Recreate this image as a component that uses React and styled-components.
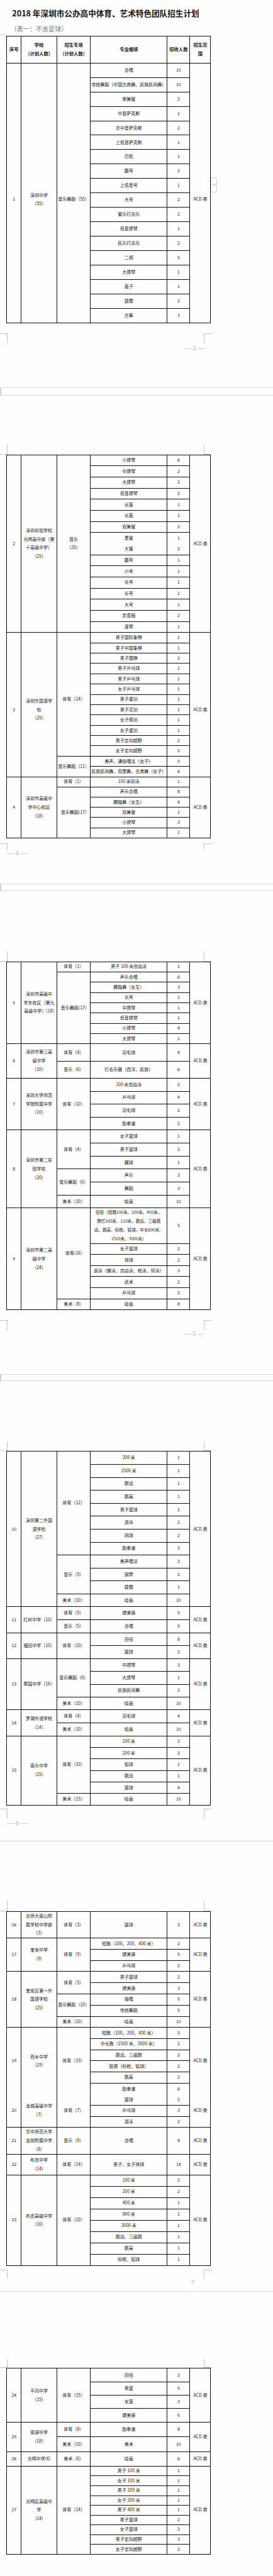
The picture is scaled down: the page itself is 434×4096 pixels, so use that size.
import React from 'react';
import styled, { createGlobalStyle } from 'styled-components';

// reference was 653px wide, the window is 434px
const K = 0.664;
const u = (v) => `${(v * K).toFixed(2)}px`;

const ACD = 'ACD 类';

const GlobalStyle = createGlobalStyle`
  html, body {
    margin: 0;
    padding: 0;
    background: #fefefe;
  }
  body {
    font-family: "Noto Sans CJK SC", "Noto Sans", sans-serif;
    color: #111;
  }
`;

const Page = styled.div`
  position: relative;
  width: 434px;
  height: 4096px;
  overflow: hidden;
`;

const Title = styled.h1`
  margin: 0;
  padding: ${u(19)} 0 0 ${u(29)};
  font-size: ${u(19)};
  line-height: ${u(24)};
  font-weight: 700;
  color: #141414;
  white-space: nowrap;
`;

const Subtitle = styled.div`
  margin-top: ${u(16.5)};
  padding-left: ${u(25)};
  font-size: ${u(15.2)};
  line-height: ${u(18)};
  color: #7a7a7a;
  white-space: nowrap;
`;

const EdgeMark = styled.div`
  width: ${u(15)};
  height: ${u(5)};
  border-bottom: 1px solid #d2d2d2;
`;

const Sheet = styled.table`
  margin-left: ${u(15.7)};
  margin-top: ${(p) => u(p.$top || 0)};
  width: ${u(488)};
  table-layout: fixed;
  border-collapse: separate;
  border-spacing: 0;
  border-top: 1px solid #111;
  border-left: 1px solid #111;
`;

const Col = styled.col`
  width: ${(p) => u(p.$w)};
`;

const Row = styled.tr`
  height: ${(p) => u(p.$h)};
`;

const Cell = styled.td`
  box-sizing: border-box;
  border-right: 1px solid #111;
  border-bottom: ${(p) =>
    p.$open ? 'none' : p.$thick ? '1.6px solid #111' : '1px solid #111'};
  padding: ${(p) => (p.$shift ? `${u(p.$shift)} 1px 0` : '0 1px')};
  text-align: center;
  vertical-align: middle;
  white-space: pre;
  font-size: ${(p) => (p.$small ? '6.6px' : '7px')};
  line-height: ${u(20.8)};
  color: #161616;
`;

const HeadCell = styled(Cell).attrs({ as: 'th' })`
  font-size: 7.3px;
  font-weight: 700;
  color: #111;
`;

const Marks = styled.div`
  display: flex;
  justify-content: space-between;
  width: ${u(508)};
  height: ${(p) => u(p.$h)};
  margin-top: ${(p) => u(p.$gap || 0)};
`;

const Mark = styled.div`
  width: ${(p) => u(p.$w)};
  border: 0 solid #c4c4c4;
  ${(p) => (p.$right ? 'border-left-width: 1px;' : 'border-right-width: 1px;')}
  ${(p) => (p.$foot ? 'border-top-width: 1px;' : 'border-bottom-width: 1px;')}
`;

const PageNum = styled.div`
  display: flex;
  justify-content: ${(p) => (p.$left ? 'flex-start' : 'flex-end')};
  height: ${(p) => u(p.$h)};
  margin-top: ${(p) => u(p.$gap)};
  padding: 0 ${(p) => u(p.$pr || 165)} 0 ${u(17)};
  ${(p) => (p.$left ? `padding-right: 0;` : `padding-left: 0;`)}
  font-family: "Liberation Serif", serif;
  font-size: ${u(16)};
  line-height: ${u(15)};
  color: #a8a8a8;
  white-space: pre;
`;

const Separator = styled.div`
  box-sizing: border-box;
  margin-top: ${(p) => u(p.$gap)};
  height: ${(p) => (p.$double ? u(p.$h) : '1px')};
  border-top: 1px solid #d8d8d8;
  border-bottom: ${(p) => (p.$double ? '1px solid #d8d8d8' : 'none')};
  border-left: ${(p) => (p.$double ? '2px solid #d0d0d0' : 'none')};
`;

const ZoomButton = styled.div`
  position: absolute;
  left: ${u(505)};
  top: ${u(425)};
  width: ${u(15)};
  height: ${u(36)};
  box-sizing: border-box;
  border: 1px solid #cfcfcf;
  border-radius: 3px;
  background: #fff;
  display: flex;
  align-items: center;
  justify-content: center;
  font-family: "Liberation Sans", sans-serif;
  font-size: 9px;
  color: #9a9a9a;
`;

const COLS = [34.3, 85.7, 80, 184, 54.3, 49.7];

const pages = [
  {
    header: true,
    schools: [
      {
        seq: '1', name: '深圳中学\n（55）', h: 34.56, shift: 32,
        groups: [
          {
            cat: '音乐舞蹈（55）',
            items: [
              ['合唱', '15'], ['传统舞蹈（中国古典舞、民族民间舞）', '10'], ['单簧管', '2'],
              ['中音萨克斯', '1'], ['次中音萨克斯', '2'], ['上低音萨克斯', '1'], ['巴松', '1'],
              ['圆号', '2'], ['上低音号', '1'], ['大号', '2'], ['管乐打击乐', '2'],
              ['低音提琴', '1'], ['民乐打击乐', '2'], ['二胡', '5'], ['大提琴', '1'],
              ['笛子', '1'], ['琵琶', '2'], ['古筝', '3'],
            ],
          },
        ],
      },
    ],
  },
  {
    schools: [
      {
        seq: '2', name: '深圳实验学校\n光明高中部（第\n十高级中学）\n（25）', h: 26.625,
        groups: [
          {
            cat: '音乐\n（25）',
            items: [
              ['小提琴', '6'], ['中提琴', '2'], ['大提琴', '2'], ['低音提琴', '2'], ['长笛', '1'],
              ['长笛', '1'], ['双簧管', '2'], ['黑管', '1', 0, 'open'], ['大管', '2'], ['圆号', '1'],
              ['小号', '1'], ['长号', '1'], ['长号', '1'], ['大号', '1'], ['定音鼓', '2'], ['竖琴', '1'],
            ],
          },
        ],
      },
      {
        seq: '3', name: '深圳外国语学\n校\n（25）', h: 24.69, shift: 24,
        groups: [
          {
            cat: '体育（14）',
            items: [
              ['男子国际象棋', '1'], ['男子中国象棋', '1'], ['男子围棋', '2'], ['男子乒乓球', '1'],
              ['男子乒乓球', '1'], ['女子乒乓球', '1'], ['男子重剑', '1'], ['男子花剑', '1'],
              ['女子佩剑', '1'], ['女子重剑', '1'], ['男子定向越野', '2'], ['女子定向越野', '2'],
            ],
          },
          {
            cat: '音乐舞蹈（11）',
            items: [['美声、通俗唱法（女子）', '5'], ['民族民间舞、芭蕾舞、古典舞（女子）', '6']],
          },
        ],
      },
      {
        seq: '4', name: '深圳市高级中\n学中心校区\n（18）', h: 24.39,
        groups: [
          { cat: '体育（1）', items: [['100 米仰泳', '1']] },
          {
            cat: '音乐舞蹈(17)',
            items: [['声乐合唱', '8'], ['踢踏舞（女生）', '4'], ['双簧管', '1'], ['小提琴', '3'], ['大提琴', '1']],
          },
        ],
      },
    ],
  },
  {
    schools: [
      {
        seq: '5', name: '深圳市高级中\n学东校区（第九\n高级中学）(18)', h: 24.625,
        groups: [
          { cat: '体育（1）', items: [['男子 100 米自由泳', '1']] },
          {
            cat: '音乐舞蹈(17)',
            items: [
              ['声乐合唱', '6'], ['踢踏舞（女生）', '3'], ['长号', '1'], ['中提琴', '1'],
              ['低音提琴', '1'], ['小提琴', '4'], ['大提琴', '1'],
            ],
          },
        ],
      },
      {
        seq: '6', name: '深圳市第三高\n级中学\n（10）', h: 41.15,
        groups: [
          { cat: '体育（4）', items: [['羽毛球', '4']] },
          { cat: '音乐（6）', items: [['打击乐器（西洋、民族）', '6']] },
        ],
      },
      {
        seq: '7', name: '深圳大学师范\n学院附属中学\n（10）', h: 31,
        groups: [
          { cat: '体育（10）', items: [['100 米自由泳', '2'], ['乒乓球', '4'], ['羽毛球', '2'], ['跆拳道', '2']] },
        ],
      },
      {
        seq: '8', name: '深圳市第二实\n验学校\n(20)', h: 31.17,
        groups: [
          { cat: '体育（4）', items: [['女子篮球', '1'], ['男子篮球', '2'], ['毽球', '1']] },
          { cat: '音乐舞蹈（6）', items: [['声乐', '3'], ['舞蹈', '3']] },
          { cat: '美术（10）', items: [['绘画', '10']] },
        ],
      },
      {
        seq: '9', name: '深圳市第二高\n级中学\n(24)', h: 26.5,
        groups: [
          {
            cat: '体育(16)',
            items: [
              ['田径（短跑100米、200米、400米，\n跨栏100米、110米，跳远、三级跳\n远、跳高、标枪、铅球、中长800米、\n1500米、3000米）', '5', 84, 'small'],
              ['女子篮球', '2'], ['排球', '2'], ['游泳（蝶泳、自由泳、蛙泳、仰泳）', '3'],
              ['武术', '2'], ['乒乓球', '2'],
            ],
          },
          { cat: '美术（8）', items: [['绘画', '8']] },
        ],
      },
    ],
  },
  {
    schools: [
      {
        seq: '10', name: '深圳第二外国\n语学校\n(27)', h: 31.02,
        groups: [
          {
            cat: '体育（12）',
            items: [
              ['200 米', '1'], ['1500 米', '1'], ['跳远', '1'], ['跳高', '1'], ['男子篮球', '2'],
              ['游泳', '2'], ['网球', '2'], ['跆拳道', '2'],
            ],
          },
          { cat: '音乐（5）', items: [['美声唱法', '2'], ['钢琴', '2'], ['琵琶', '1']] },
          { cat: '美术（10）', items: [['绘画', '10']] },
        ],
      },
      {
        seq: '11', name: '红岭中学（10）', h: 31,
        groups: [
          { cat: '体育（5）', items: [['健美操', '5']] },
          { cat: '音乐（5）', items: [['合唱', '5']] },
        ],
      },
      {
        seq: '12', name: '福田中学（10）', h: 31,
        groups: [{ cat: '体育（10）', items: [['田径', '8'], ['篮球', '2']] }],
      },
      {
        seq: '13', name: '翠园中学（16）', h: 30.75,
        groups: [
          { cat: '音乐舞蹈（6）', items: [['中提琴', '3'], ['大提琴', '1'], ['民族民间舞', '2']] },
          { cat: '美术（10）', items: [['绘画', '10']] },
        ],
      },
      {
        seq: '14', name: '罗湖外语学校\n（14）', h: 31,
        groups: [
          { cat: '体育（4）', items: [['羽毛球', '4']] },
          { cat: '美术（10）', items: [['绘画', '10']] },
        ],
      },
      {
        seq: '15', name: '南头中学\n(25)', h: 27.67,
        groups: [
          {
            cat: '体育（10）',
            items: [['100 米', '2'], ['200 米', '2'], ['铅球', '1'], ['跳远', '1', 0, 'thick'], ['篮球', '4']],
          },
          { cat: '美术（15）', items: [['绘画', '15']] },
        ],
      },
    ],
  },
  {
    schools: [
      {
        seq: '16', name: '北师大南山附\n属学校中学部\n（3）', h: 63.3,
        groups: [{ cat: '体育（3）', items: [['篮球', '3']] }],
      },
      {
        seq: '17', name: '宝安中学\n(9)', h: 26.67,
        groups: [
          { cat: '体育（9）', items: [['短跑（100、200、400 米）', '2'], ['健美操', '5'], ['乒乓球', '2']] },
        ],
      },
      {
        seq: '18', name: '宝安区第一外\n国语学校\n(25)', h: 26.8,
        groups: [
          { cat: '体育（5）', items: [['男子篮球', '2'], ['健美操', '3']] },
          { cat: '音乐舞蹈（10）', items: [['独唱', '5'], ['传统舞蹈', '5']] },
          { cat: '美术（10）', items: [['绘画', '10']] },
        ],
      },
      {
        seq: '19', name: '西乡中学\n(19)', h: 26.6, open: true,
        groups: [
          {
            cat: '体育（19）',
            items: [
              ['短跑（100、200、400 米）', '5'], ['中长跑（1500 米、3000 米）', '2'],
              ['跳远、三级跳', '2'], ['投掷（标枪、铅球）', '2'], ['跳高', '2'], ['跆拳道', '6', 0, 'open'],
            ],
          },
        ],
      },
      {
        seq: '20', name: '龙城高级中学\n(7)', h: 26.6,
        groups: [{ cat: '体育（7）', items: [['篮球', '2'], ['乒乓球', '3'], ['游泳', '2']] }],
      },
      {
        seq: '21', name: '华中师范大学\n龙岗附属中学\n（8）', h: 62.6,
        groups: [{ cat: '音乐（8）', items: [['合唱', '8']] }],
      },
      {
        seq: '22', name: '布吉中学\n(14)', h: 50,
        groups: [{ cat: '体育（14）', items: [['男子、女子排球', '14']] }],
      },
      {
        seq: '23', name: '布吉高级中学\n(10)', h: 27.09,
        groups: [
          {
            cat: '体育（10）',
            items: [
              ['100 米', '2'], ['200 米', '2'], ['400 米', '1'], ['800 米', '1'], ['3000 米', '1'],
              ['跳远、三级跳', '1'], ['跳高', '1'], ['标枪、铅球', '1'],
            ],
          },
        ],
      },
    ],
  },
  {
    schools: [
      {
        seq: '24', name: '平冈中学\n(15)', h: 32.17,
        groups: [{ cat: '体育（15）', items: [['田径', '2'], ['男篮', '5'], ['女篮', '3'], ['健美操', '5']] }],
      },
      {
        seq: '25', name: '观澜中学\n（18）', h: 35.35,
        groups: [
          { cat: '体育（8）', items: [['跆拳道', '8']] },
          { cat: '美术（10）', items: [['美术', '10']] },
        ],
      },
      {
        seq: '26', name: '光明中学(6)', h: 35,
        groups: [{ cat: '美术（6）', items: [['绘画', '6']] }],
      },
      {
        seq: '27', name: '光明区高级中\n学\n(14)', h: 23.4,
        groups: [
          {
            cat: '体育（14）',
            items: [
              ['男子 100 米', '1'], ['女子 100 米', '1'], ['男子 200 米', '1'], ['女子 200 米', '1'],
              ['男子 400 米', '1'], ['男子篮球', '2'], ['女子篮球', '2'], ['男子定向越野', '3'],
              ['女子定向越野', '2'],
            ],
          },
        ],
      },
    ],
  },
];

// gaps between one page's table and the next, in reference pixels
const breaks = [
  { gap: 24.7, foot: 24, numGap: 4, numH: 14, num: '— 3 —', sepGap: 88, sepH: 19, double: true, topGap: 117, top: 24 },
  { gap: 13, foot: 16, numGap: 0, numH: 14, num: '— 4 —', left: true, sepGap: 66, sepH: 18, double: true, topGap: 144, top: 24 },
  { gap: 23.4, foot: 24.3, numGap: 1.7, numH: 15, num: '— 5 —', sepGap: 89.3, sepH: 17, double: true, topGap: 143.7, top: 23.3 },
  { gap: 7.7, foot: 25, numGap: 1.7, numH: 15, num: '— 6 —', left: true, sepGap: 35.6, sepH: 1, topGap: 141.7, top: 25 },
  { gap: 9, foot: 21.7, numGap: 3, numH: 12, num: '7', pr: 188, sepGap: 14.7, sepH: 1, topGap: 160.7, top: 22.3 },
];

function SchoolRows({ school }) {
  const total = school.groups.reduce((n, g) => n + g.items.length, 0);
  const rows = [];
  school.groups.forEach((group, gi) => {
    group.items.forEach(([detail, count, h, flag], ii) => {
      const first = gi === 0 && ii === 0;
      const lastGroup = gi === school.groups.length - 1;
      rows.push(
        <Row key={`${school.seq}-${gi}-${ii}`} $h={h || school.h}>
          {first && (
            <Cell rowSpan={total} $open={school.open} $shift={school.shift}>
              {school.seq}
            </Cell>
          )}
          {first && (
            <Cell rowSpan={total} $open={school.open} $shift={school.shift}>
              {school.name}
            </Cell>
          )}
          {ii === 0 && (
            <Cell
              rowSpan={group.items.length}
              $open={school.open && lastGroup}
              $shift={gi === 0 ? school.shift : 0}
            >
              {group.cat}
            </Cell>
          )}
          <Cell $open={flag === 'open'} $thick={flag === 'thick'} $small={flag === 'small'}>
            {detail}
          </Cell>
          <Cell $open={flag === 'open'} $thick={flag === 'thick'}>
            {count}
          </Cell>
          {first && (
            <Cell rowSpan={total} $open={school.open} $shift={school.shift}>
              {ACD}
            </Cell>
          )}
        </Row>
      );
    });
  });
  return rows;
}

function PlanTable({ page }) {
  return (
    <Sheet $top={page.header ? 1.3 : 0}>
      <colgroup>
        {COLS.map((w, i) => (
          <Col key={i} $w={w} />
        ))}
      </colgroup>
      {page.header && (
        <thead>
          <Row $h={65}>
            <HeadCell>序号</HeadCell>
            <HeadCell>{'学校\n（计划人数）'}</HeadCell>
            <HeadCell>{'招生专项\n（计划人数）'}</HeadCell>
            <HeadCell>专业细项</HeadCell>
            <HeadCell>招收人数</HeadCell>
            <HeadCell>{'招生范\n围'}</HeadCell>
          </Row>
        </thead>
      )}
      <tbody>
        {page.schools.map((s) => (
          <SchoolRows key={s.seq} school={s} />
        ))}
      </tbody>
    </Sheet>
  );
}

function PageBreak({ b }) {
  return (
    <>
      <Marks $gap={b.gap} $h={b.foot}>
        <Mark $w={17} $foot />
        <Mark $w={19} $foot $right />
      </Marks>
      <PageNum $gap={b.numGap} $h={b.numH} $left={b.left} $pr={b.pr}>
        {b.num}
      </PageNum>
      <Separator $gap={b.sepGap} $h={b.sepH} $double={b.double} />
      <Marks $gap={b.topGap} $h={b.top}>
        <Mark $w={17} />
        <Mark $w={19} $right />
      </Marks>
    </>
  );
}

export default function App() {
  return (
    <Page>
      <GlobalStyle />
      <Title>2018 年深圳市公办高中体育、艺术特色团队招生计划</Title>
      <Subtitle>（表一：不含足球）</Subtitle>
      <EdgeMark />
      {pages.map((page, i) => (
        <React.Fragment key={i}>
          <PlanTable page={page} />
          {breaks[i] && <PageBreak b={breaks[i]} />}
        </React.Fragment>
      ))}
      <ZoomButton>+</ZoomButton>
    </Page>
  );
}
